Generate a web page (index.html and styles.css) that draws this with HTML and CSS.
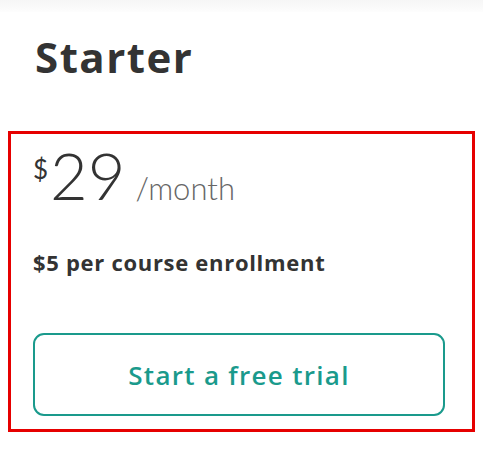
FILE: index.html
```html
<!DOCTYPE html>
<html lang="en">
<head>
    <meta charset="UTF-8">
    <meta name="viewport" content="width=device-width, initial-scale=1.0">
    <title>Starter plan</title>
    <link rel="stylesheet" href="styles.css">
</head>
<body>
<div class="top-bar"></div>
<h1 class="plan-name">Starter</h1>
<div class="plan-card">
    <div class="price">
        <span class="currency">$</span>
        <span class="amount">29</span>
        <span class="period">/month</span>
    </div>
    <p class="fee">$5 per course enrollment</p>
    <button type="button" class="trial-btn">Start a free trial</button>
</div>
</body>
</html>
```

FILE: styles.css
```css
body {
    font-family: "Open Sans", Lato, sans-serif;
    margin: 0;
    background-color: #fff;
    color: #333;
}

.top-bar {
    height: 12px;
    background: linear-gradient(#f6f6f6, #fdfdfd);
}

.plan-name {
    margin: 20px 0 0 35px;
    font-size: 42px;
    line-height: 50px;
    font-weight: 700;
    color: #333;
    letter-spacing: 1.5px;
}

.plan-card {
    margin: 49px 8px 0 8px;
    width: 467px;
    height: 301px;
    border: 3px solid #e60000;
    padding: 5px 0 0 22px;
    box-sizing: border-box;
}

.price {
    display: flex;
    align-items: baseline;
    height: 72px;
    font-family: Lato, sans-serif;
}

.currency {
    font-size: 26px;
    font-weight: 400;
    align-self: flex-start;
    margin-top: 14px;
}

.amount {
    font-size: 65px;
    font-weight: 300;
    line-height: 72px;
    margin-left: 2px;
}

.period {
    font-size: 31px;
    font-weight: 300;
    color: #666;
    margin-left: 10px;
}

.fee {
    margin: 38px 0 0 0;
    font-size: 22px;
    line-height: 26px;
    font-weight: 700;
    color: #333;
    letter-spacing: 0.7px;
}

.trial-btn {
    display: block;
    margin-top: 58px;
    width: 412px;
    height: 83px;
    font-family: "Open Sans", sans-serif;
    font-size: 26px;
    font-weight: 600;
    color: #1a9a8c;
    background-color: #fff;
    border: 2px solid #1a9a8c;
    border-radius: 11px;
    letter-spacing: 1.3px;
    cursor: pointer;
}
```
